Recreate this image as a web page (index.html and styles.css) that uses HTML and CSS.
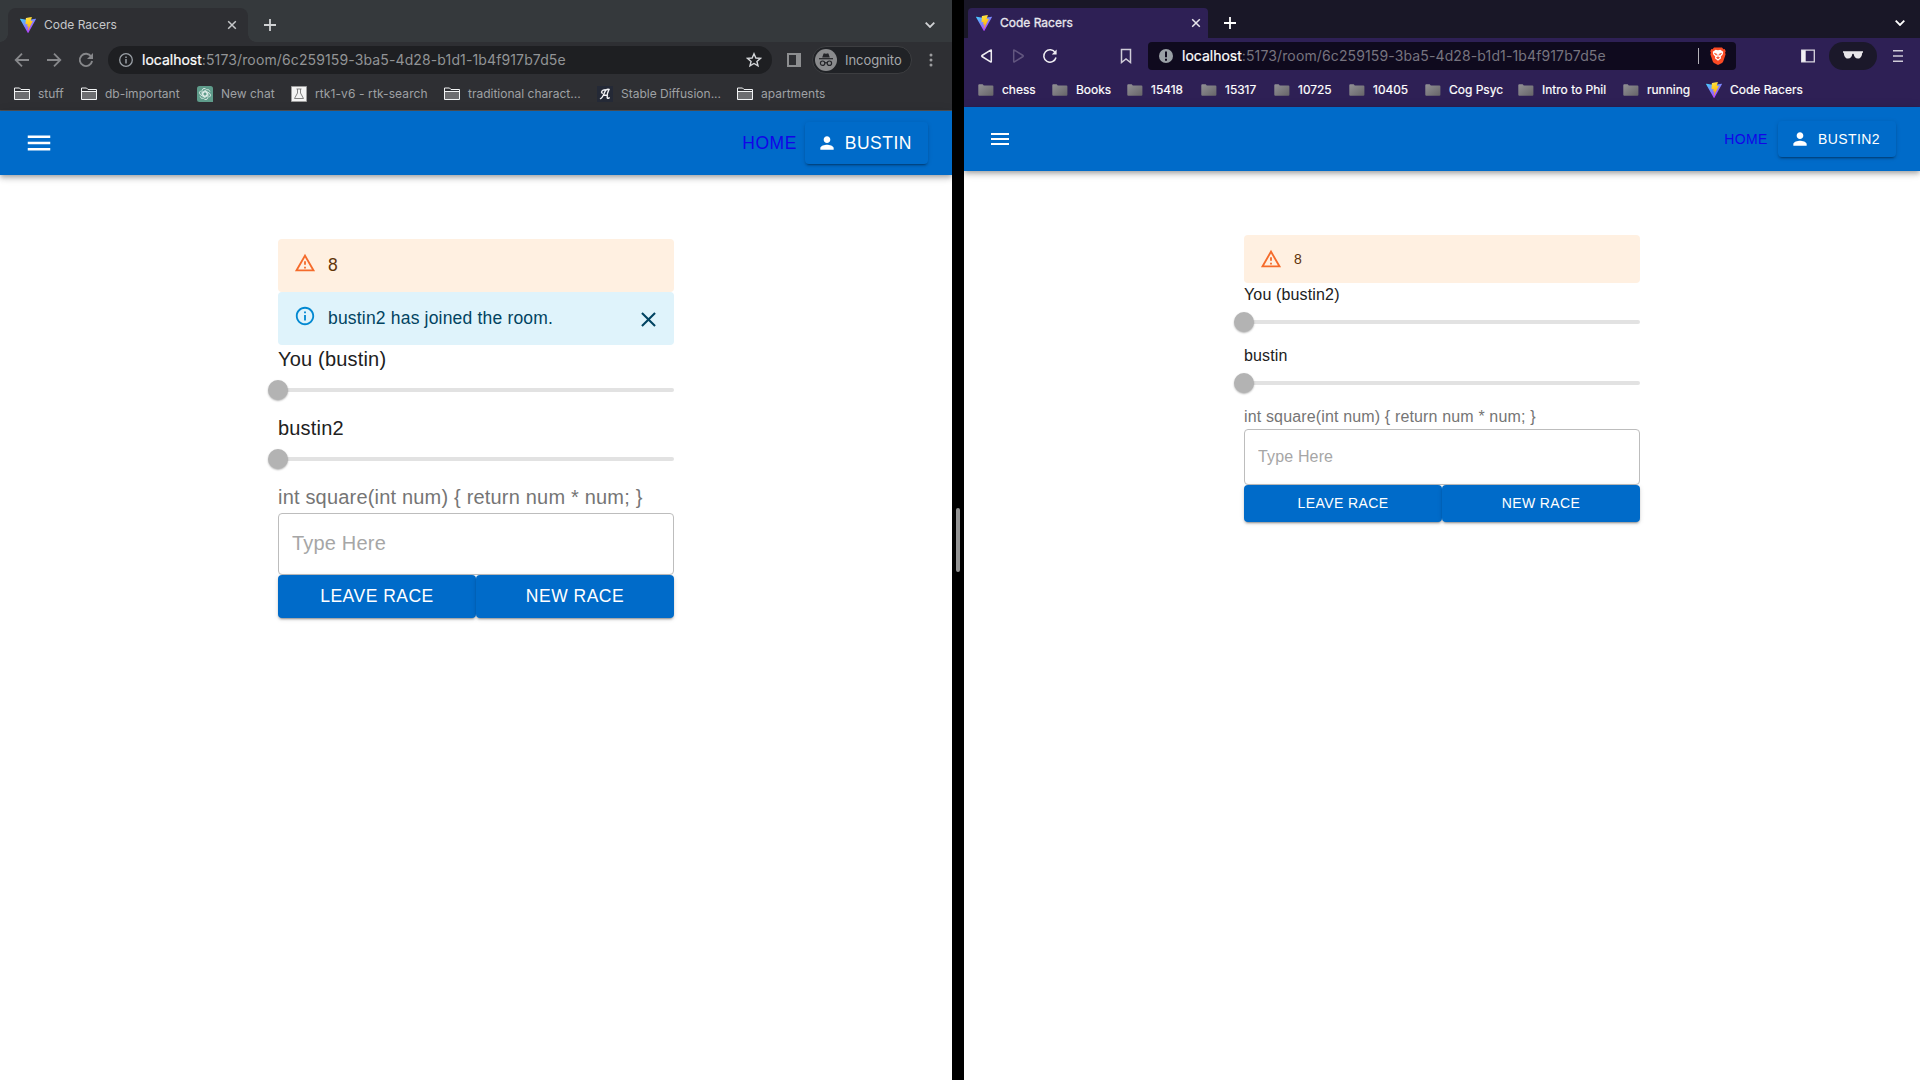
FILE: index.html
```html
<!DOCTYPE html>
<html lang="en">
<head>
<meta charset="utf-8">
<title>Code Racers</title>
<link rel="stylesheet" href="styles.css">
</head>
<body>
<svg class="defs" aria-hidden="true">
  <defs>
    <linearGradient id="vite-a" x1="0" y1="0" x2=".65" y2="1"><stop offset="0" stop-color="#41d1ff"/><stop offset="1" stop-color="#bd34fe"/></linearGradient>
    <linearGradient id="vite-b" x1=".4" y1="0" x2=".6" y2="1"><stop offset="0" stop-color="#ffea83"/><stop offset=".1" stop-color="#ffdd35"/><stop offset="1" stop-color="#ffa800"/></linearGradient>
    <linearGradient id="folder-fill" x1="0" y1="0" x2="1" y2="1"><stop offset="0" stop-color="#929196"/><stop offset="1" stop-color="#666468"/></linearGradient>
    <symbol id="vite" viewBox="0 0 256 257"><path fill="url(#vite-a)" d="M255.153 37.938 134.897 252.976c-2.483 4.44-8.862 4.466-11.382.048L.875 37.958c-2.746-4.814 1.371-10.646 6.827-9.67l120.385 21.517a6.537 6.537 0 0 0 2.322-.004l117.867-21.483c5.438-.991 9.574 4.796 6.877 9.62Z"/><path fill="url(#vite-b)" d="M185.432.063 96.44 17.501a3.268 3.268 0 0 0-2.634 3.014l-5.474 92.456a3.268 3.268 0 0 0 3.997 3.378l24.777-5.718c2.318-.535 4.413 1.507 3.936 3.838l-7.361 36.047c-.495 2.426 1.782 4.5 4.151 3.78l15.304-4.649c2.372-.72 4.652 1.36 4.15 3.788l-11.698 56.621c-.732 3.542 3.979 5.473 5.943 2.437l1.313-2.028 72.516-144.72c1.215-2.423-.88-5.186-3.54-4.672l-25.505 4.922c-2.396.462-4.435-1.77-3.759-4.114l16.646-57.705c.677-2.35-1.37-4.583-3.769-4.113Z"/></symbol>
    <symbol id="folder-line" viewBox="0 0 16 16"><path d="M.5 2h5l1.500 1.500h8.500v10H.5z" fill="#2e2f33" stroke="#f1f3f4" stroke-width="1"/><path d="M1 6h14v7H1z" fill="#6c6d70"/><path d="M1 5.500h14" stroke="#f1f3f4"/></symbol>
    <symbol id="folder-solid" viewBox="0 0 16 16"><path d="M.3 3.2q0-1 1-1h3.4l1.1 1.3h8.6q1 0 1 1v8.2q0 1-1 1H1.3q-1 0-1-1z" fill="url(#folder-fill)"/></symbol>
    <symbol id="menu" viewBox="0 0 24 24"><path fill="currentColor" d="M3 18h18v-2H3v2zm0-5h18v-2H3v2zm0-7v2h18V6H3z"/></symbol>
    <symbol id="person" viewBox="0 0 24 24"><path fill="currentColor" d="M12 12c2.21 0 4-1.79 4-4s-1.79-4-4-4-4 1.79-4 4 1.79 4 4 4zm0 2c-2.67 0-8 1.34-8 4v2h16v-2c0-2.66-5.33-4-8-4z"/></symbol>
    <symbol id="warning" viewBox="0 0 24 24"><path fill="currentColor" d="M12 5.99L19.53 19H4.47L12 5.99M12 2L1 21h22L12 2zm1 14h-2v2h2v-2zm0-6h-2v4h2v-4z"/></symbol>
    <symbol id="info" viewBox="0 0 24 24"><path fill="currentColor" d="M11 7h2v2h-2zM11 11h2v6h-2zM12 2C6.48 2 2 6.48 2 12s4.48 10 10 10 10-4.48 10-10S17.52 2 12 2zm0 18c-4.41 0-8-3.59-8-8s3.59-8 8-8 8 3.59 8 8-3.59 8-8 8z"/></symbol>
    <symbol id="close" viewBox="0 0 24 24"><path fill="currentColor" d="M19 6.41L17.59 5 12 10.59 6.41 5 5 6.41 10.59 12 5 17.59 6.41 19 12 13.41 17.59 19 19 17.59 13.41 12z"/></symbol>
    <symbol id="cross" viewBox="0 0 10 10"><path d="M1.200 1.200l7.600 7.600M8.800 1.200L1.200 8.800" stroke="currentColor" stroke-width="1.500"/></symbol>
    <symbol id="plus" viewBox="0 0 12 12"><path d="M6 0v12M0 6h12" stroke="currentColor" stroke-width="1.800"/></symbol>
    <symbol id="chevron" viewBox="0 0 10 6"><path d="M.7.7L5 5 9.300.7" fill="none" stroke="currentColor" stroke-width="1.800"/></symbol>
  </defs>
</svg>

<div class="desktop">
  <section class="window chrome">
    <header>
      <div class="tabstrip">
        <div class="tab"><svg class="i16"><use href="#vite"/></svg><span class="tab-title">Code Racers</span><svg class="tab-close"><use href="#cross"/></svg></div>
        <svg class="new-tab"><use href="#plus"/></svg>
        <svg class="tab-search"><use href="#chevron"/></svg>
      </div>
      <div class="toolbar">
        <svg class="nav" viewBox="0 0 16 16"><path d="M15 8H2M8 1.700L1.700 8 8 14.300" fill="none" stroke="currentColor" stroke-width="1.800"/></svg>
        <svg class="nav" viewBox="0 0 16 16"><path d="M1 8h13M8 1.700L14.300 8 8 14.300" fill="none" stroke="currentColor" stroke-width="1.800"/></svg>
        <svg class="nav" viewBox="0 0 16 16"><path d="M13.200 4.500A6.200 6.200 0 1 0 14.100 9" fill="none" stroke="currentColor" stroke-width="1.900"/><path d="M15 1v6H9z" fill="currentColor"/></svg>
        <div class="omnibox">
          <svg class="i16" viewBox="0 0 16 16"><circle cx="8" cy="8" r="6.300" fill="none" stroke="#9aa0a6" stroke-width="1.300"/><path d="M8 7v4.500M8 4.400v1.500" stroke="#9aa0a6" stroke-width="1.500"/></svg>
          <span class="url"><b>localhost</b>:5173/room/6c259159-3ba5-4d28-b1d1-1b4f917b7d5e</span>
          <svg class="i16 star" viewBox="0 0 16 16"><path d="M8 1.800l1.850 4.200 4.600.4-3.500 3 1.050 4.500L8 11.500l-4 2.400 1.050-4.500-3.500-3 4.600-.4z" fill="none" stroke="#d5d7da" stroke-width="1.400"/></svg>
        </div>
        <svg class="panel" viewBox="0 0 14 14"><path d="M1 1h12v12H1z" fill="none" stroke="#8d8e90" stroke-width="2"/><path d="M9 1h4v12H9z" fill="#8d8e90"/></svg>
        <div class="incognito">
          <svg viewBox="0 0 22 22"><circle cx="11" cy="11" r="11" fill="#8a8b8d"/><path d="M7.200 8.500l1.200-3.600q.3-.8 1.100-.5l1.500.4 1.500-.4q.8-.3 1.100.5l1.200 3.600z" fill="#242529"/><path d="M4 9.700h14" stroke="#242529" stroke-width="1.200"/><g fill="none" stroke="#242529" stroke-width="1.200"><circle cx="7.600" cy="14.200" r="2.200"/><circle cx="14.400" cy="14.200" r="2.200"/><path d="M9.800 14q1.200-.7 2.400 0"/></g></svg>
          <span>Incognito</span>
        </div>
        <svg class="dots" viewBox="0 0 4 14"><g fill="#9b9c9e"><circle cx="2" cy="2" r="1.500"/><circle cx="2" cy="7" r="1.500"/><circle cx="2" cy="12" r="1.500"/></g></svg>
      </div>
      <nav class="bookmarks">
        <span><svg class="i16"><use href="#folder-line"/></svg>stuff</span>
        <span><svg class="i16"><use href="#folder-line"/></svg>db-important</span>
        <span><svg class="i16" viewBox="0 0 16 16"><path d="M2.500 0h11Q16 0 16 2.500V16H2.500Q0 16 0 13.500v-11Q0 0 2.500 0z" fill="#5f9c8b"/><g fill="none" stroke="#e6f1ee" stroke-width=".8"><path id="petal" d="M8 5.600l2.100 1.200v3.400L6.500 12.300Q3.700 13.200 3 10.300"/><use href="#petal" transform="rotate(60 8 8)"/><use href="#petal" transform="rotate(120 8 8)"/><use href="#petal" transform="rotate(180 8 8)"/><use href="#petal" transform="rotate(240 8 8)"/><use href="#petal" transform="rotate(300 8 8)"/></g></svg>New chat</span>
        <span class="wide"><svg class="i16" viewBox="0 0 16 16"><path d="M.5.5h15v15H.5z" fill="#f4f4f4" stroke="#9d9d9d"/><path d="M5.500 3h5M6.500 3v4l-3 5.500h9L9.500 7V3" fill="none" stroke="#777" stroke-width=".9"/></svg>rtk1-v6 - rtk-search</span>
        <span><svg class="i16"><use href="#folder-line"/></svg>traditional charact...</span>
        <span><svg class="i16" viewBox="0 0 16 16"><rect width="16" height="16" fill="#242936"/><path d="M3.500 12.600c2.300-.4 3.800-6.500 5.300-8.300q1.500-1.400 3.200-.9c-1.300 2.400-2 6-1.800 8.200q.2 1.300 2 .2M5.200 7.300C3.700 6 5 4 8.300 3.800M6.500 9.300h4" fill="none" stroke="#f3f3f5" stroke-width="1.400" stroke-linecap="round"/></svg>Stable Diffusion...</span>
        <span><svg class="i16"><use href="#folder-line"/></svg>apartments</span>
      </nav>
    </header>
    <main class="page large">
      <div class="appbar">
        <svg class="menu-icon"><use href="#menu"/></svg>
        <a class="home">HOME</a>
        <button class="user"><svg><use href="#person"/></svg>BUSTIN</button>
      </div>
      <div class="container">
        <div class="alert warn"><svg><use href="#warning"/></svg><span>8</span></div>
        <div class="alert note"><svg><use href="#info"/></svg><span>bustin2 has joined the room.</span><svg class="dismiss"><use href="#close"/></svg></div>
        <p>You (bustin)</p>
        <div class="slider"><i></i></div>
        <p>bustin2</p>
        <div class="slider"><i></i></div>
        <p class="prompt">int square(int num) { return num * num; }</p>
        <input class="field" placeholder="Type Here">
        <div class="actions"><button>LEAVE RACE</button><button>NEW RACE</button></div>
      </div>
    </main>
  </section>

  <div class="divider"><i></i></div>

  <section class="window brave">
    <header>
      <div class="tabstrip">
        <div class="tab"><svg class="i16"><use href="#vite"/></svg><span class="tab-title">Code Racers</span><svg class="tab-close"><use href="#cross"/></svg></div>
        <svg class="new-tab"><use href="#plus"/></svg>
        <svg class="tab-search"><use href="#chevron"/></svg>
      </div>
      <div class="toolbar">
        <svg class="nav" viewBox="0 0 16 16"><path d="M13.300 2.500v11q0 .8-.7.3L4 8.500Q3.300 8 4 7.500l8.600-5.300q.7-.5.7.3z" fill="none" stroke="#efedf2" stroke-width="1.500"/></svg>
        <svg class="nav" viewBox="0 0 16 16"><path d="M3.700 2.500v11q0 .8.7.3L13 8.500q.7-.5 0-1L4.400 2.200q-.7-.5-.7.3z" fill="none" stroke="#62567f" stroke-width="1.500"/></svg>
        <svg class="nav" viewBox="0 0 16 16"><path d="M13.300 4.800A6.200 6.200 0 1 0 14 9.500" fill="none" stroke="#efedf2" stroke-width="1.500"/><path d="M14.600 1.500v5H9.800z" fill="#efedf2"/></svg>
        <svg class="mark" viewBox="0 0 12 16"><path d="M1.500 1.500h9v13L6 11l-4.500 3.500z" fill="none" stroke="#d0ccd8" stroke-width="1.500"/></svg>
        <div class="omnibox">
          <svg class="i16" viewBox="0 0 16 16"><circle cx="8" cy="8" r="7" fill="#9aa0a6"/><path d="M8 3.500v5.800M8 10.700v2" stroke="#0f0a1e" stroke-width="2"/></svg>
          <span class="url"><b>localhost</b>:5173/room/6c259159-3ba5-4d28-b1d1-1b4f917b7d5e</span>
          <i class="rule"></i>
          <svg class="lion" viewBox="0 0 16 18"><path d="M4 .5h8l1.500 1.700 1.200-.1 1 2.200-.6 1.500.5 1.500-2.300 7q-.4 1-1.300 1.600L8 18l-4-2.100q-.9-.6-1.300-1.600L.4 7.300.9 5.800.3 4.300l1-2.200 1.200.1z" fill="#fb4a24"/><path d="M8 3.300l2.300-.5 2.900 2-.4 2.400-2.100 2.600.4 1.500L8 13.800l-3.100-2.500.4-1.500-2.100-2.600-.4-2.400 2.900-2z" fill="#fff"/><path d="M4.300 6.200l2.500.9-.6 1.200zM11.700 6.200l-2.500.9.6 1.200zM8 7.300v2.500M6.400 10.600L8 9.900l1.600.7L8 11.900z" fill="#fb4a24" stroke="#fb4a24" stroke-width=".5"/></svg>
        </div>
        <svg class="panel" viewBox="0 0 14 14"><path d="M.7 1.200h12.600v11.600H.7z" fill="none" stroke="#d9d6df" stroke-width="1.300"/><path d="M.7 1.200h4v11.600h-4z" fill="#f2f0f4"/></svg>
        <div class="private"><svg viewBox="0 0 20 8"><path d="M0 .2h20v1.300l-.8.4c-.2 3-1.500 5.600-4.200 5.600-2.600 0-4-2-4.300-4.500Q10 2.500 9.300 3C9 5.500 7.600 7.500 5 7.500 2.300 7.500 1 4.900.8 1.900L0 1.500z" fill="#e8e6ea"/></svg></div>
        <svg class="burger" viewBox="0 0 10 12"><path d="M0 .7h10M0 6h10M0 11.300h10" stroke="#d0ccd8" stroke-width="1.400"/></svg>
      </div>
      <nav class="bookmarks">
        <span><svg class="i16"><use href="#folder-solid"/></svg>chess</span>
        <span><svg class="i16"><use href="#folder-solid"/></svg>Books</span>
        <span><svg class="i16"><use href="#folder-solid"/></svg>15418</span>
        <span><svg class="i16"><use href="#folder-solid"/></svg>15317</span>
        <span><svg class="i16"><use href="#folder-solid"/></svg>10725</span>
        <span><svg class="i16"><use href="#folder-solid"/></svg>10405</span>
        <span><svg class="i16"><use href="#folder-solid"/></svg>Cog Psyc</span>
        <span><svg class="i16"><use href="#folder-solid"/></svg>Intro to Phil</span>
        <span><svg class="i16"><use href="#folder-solid"/></svg>running</span>
        <span><svg class="i16"><use href="#vite"/></svg>Code Racers</span>
      </nav>
    </header>
    <main class="page">
      <div class="appbar">
        <svg class="menu-icon"><use href="#menu"/></svg>
        <a class="home">HOME</a>
        <button class="user"><svg><use href="#person"/></svg>BUSTIN2</button>
      </div>
      <div class="container">
        <div class="alert warn"><svg><use href="#warning"/></svg><span>8</span></div>
        <p>You (bustin2)</p>
        <div class="slider"><i></i></div>
        <p>bustin</p>
        <div class="slider"><i></i></div>
        <p class="prompt">int square(int num) { return num * num; }</p>
        <input class="field" placeholder="Type Here">
        <div class="actions"><button>LEAVE RACE</button><button>NEW RACE</button></div>
      </div>
    </main>
  </section>
</div>
</body>
</html>
```
FILE: styles.css
```css
* { box-sizing: border-box; }
body { margin: 0; background: #000; overflow: hidden; }
svg { display: block; flex: none; }
.defs { position: absolute; width: 0; height: 0; }
.i16 { width: 16px; height: 16px; }

.desktop { display: grid; grid-template-columns: 952px 12px 956px; height: 1080px; }
.window { display: flex; flex-direction: column; overflow: hidden; background: #fff; }
.divider { display: flex; justify-content: center; align-items: center; background: #000; }
.divider i { width: 4px; height: 64px; border-radius: 2px; background: #929292; }

/* browser frames */
header { font: 12px/16px Inter, sans-serif; white-space: nowrap; }
.tabstrip, .toolbar, .tab, .omnibox, .bookmarks span { display: flex; align-items: center; }
.tabstrip { padding-top: 8px; padding-left: 8px; }
.tab { width: 240px; padding: 0 11px 0 12px; border-radius: 8px 8px 0 0; align-self: stretch; }
.tab-title { margin-left: 8px; flex: 1; }
.tab-close { width: 10px; height: 10px; }
.new-tab { width: 12px; height: 12px; margin-left: 16px; }
.tab-search { width: 10px; height: 6px; margin-left: auto; }
.toolbar .nav { width: 16px; height: 16px; }
.omnibox { height: 28px; font-size: 14px; }
.url { flex: 1; letter-spacing: .125px; }
.url b { font-weight: 400; color: #fff; -webkit-text-stroke: .2px #fff; letter-spacing: 0; }
.panel { width: 14px; height: 14px; }
.bookmarks { display: grid; align-items: center; }
.bookmarks span { gap: 8px; }
.bookmarks .wide { letter-spacing: .1px; }

.chrome header { height: 111px; background: #2e2f33; border-bottom: 1px solid #505154; color: #9fa1a4; }
.chrome .tabstrip { height: 42px; background: #35393c; padding-right: 17px; }
.chrome .tab { background: #2e2f33; color: #c6c8ca; position: relative; }
.chrome .tab::before, .chrome .tab::after { content: ""; position: absolute; bottom: 0; width: 8px; height: 8px; }
.chrome .tab::before { right: 100%; background: radial-gradient(circle at 0 0, #35393c 7.5px, #2e2f33 8px); }
.chrome .tab::after { left: 100%; background: radial-gradient(circle at 100% 0, #35393c 7.5px, #2e2f33 8px); }
.chrome .new-tab, .chrome .tab-search { color: #d0d2d4; }
.chrome .toolbar { height: 36px; padding-left: 14px; color: #87888b; }
.chrome .nav + .nav { margin-left: 16px; }
.chrome .omnibox { width: 664px; margin-left: 14px; padding: 0 10px; border-radius: 14px; background: #1e1f22; color: #929496; }
.chrome .url { margin-left: 8px; }
.chrome .panel { margin-left: 15px; }
.incognito { display: flex; align-items: center; gap: 8px; width: 100px; height: 28px; margin-left: 11px; padding-left: 2px; border: 1px solid #3d3e41; border-radius: 14px; background: #202226; color: #a5a8ab; font-size: 13px; letter-spacing: -.05px; }
.incognito svg { width: 22px; height: 22px; }
.dots { width: 4px; height: 14px; margin-left: 16.5px; }
.chrome .bookmarks { height: 32px; padding-left: 14px; grid-template-columns: 67px 116px 94px 153px 153px 140px 100px; }

.brave header { height: 107px; background: #2e2055; color: #fff; }
.brave .tabstrip { height: 38px; background: #191727; padding-left: 4px; padding-right: 15px; }
.brave .tab { background: #2e2055; padding: 0 7px 0 8px; border-radius: 4px 4px 0 0; color: #e9e7ee; }
.brave .tab-title { -webkit-text-stroke: .3px #e9e7ee; }
.brave .toolbar { height: 36px; padding-left: 14px; }
.brave .nav + .nav { margin-left: 16px; }
.brave .mark { width: 12px; height: 16px; margin-left: 62px; }
.brave .omnibox { width: 588px; margin-left: 16px; padding: 0 10px; border-radius: 4px; background: #0f0a1e; color: #77747f; }
.brave .url { margin-left: 8px; }
.rule { width: 1px; height: 16px; background: #b5b2b9; margin-right: 11px; }
.lion { width: 16px; height: 18px; }
.brave .panel { margin-left: 65px; }
.private { display: grid; place-items: center; width: 48px; height: 28px; margin-left: 14px; padding-bottom: 2px; border-radius: 14px; background: #1b182a; }
.private svg { width: 20px; height: 8px; }
.burger { width: 10px; height: 12px; margin-left: 16px; }
.brave .bookmarks { height: 31px; padding-left: 14px; grid-template-columns: 74px 75px 74px 73px 75px 76px 93px 105px 83px 100px; -webkit-text-stroke: .2px #fff; }

/* Code Racers page; everything scales with the base text size */
.page { --base: 16px; font: 400 var(--base)/1.5 "Liberation Sans", Arial, sans-serif; color: #212121; }
.large { --base: 20px; }
.appbar { display: flex; align-items: center; height: 64px; padding: 0 24px; background: #006bc9; color: #fff; box-shadow: 0 2px 4px -1px rgba(0,0,0,.2), 0 4px 5px rgba(0,0,0,.14), 0 1px 10px rgba(0,0,0,.12); }
.menu-icon { width: 1.5em; height: 1.5em; margin-right: auto; }
.home, button { font: 400 calc(var(--base) * .875)/1.75 "Liberation Sans", Arial, sans-serif; letter-spacing: .02857em; }
.home { min-width: 64px; padding: 6px 8px; color: #1204e8; text-align: center; }
button { border: 0; border-radius: 4px; padding: 6px 16px; color: #fff; background: #006bc9; box-shadow: 0 3px 1px -2px rgba(0,0,0,.2), 0 2px 2px rgba(0,0,0,.14), 0 1px 5px rgba(0,0,0,.12); }
.user { display: flex; align-items: center; gap: 8px; padding-left: 12px; }
.user svg { width: 20px; height: 20px; }
.container { width: 396px; margin: 64px auto 0; }
.alert { display: flex; padding: 6px 16px; border-radius: 4px; font-size: .875em; line-height: 1.43; letter-spacing: .01071em; }
.alert svg { width: 22px; height: 22px; margin: 7px 12px 0 0; }
.alert span { padding: 8px 0; flex: 1; }
.alert .dismiss { width: 25px; height: 25px; margin: 9px -3px 0 0; color: #014361; }
.warn { background: #fff0e1; color: #5f3409; }
.warn svg { color: #f56b2b; }
.note { background: #dff3fb; color: #014361; }
.note svg { color: #0288d1; }
.page p { margin: 0; letter-spacing: .00938em; }
.large p { height: 30px; line-height: 28px; }
.page .prompt { color: #757575; }
.slider { height: 37px; padding-top: 13px; }
.large .slider { height: 39px; }
.slider::before { content: ""; display: block; height: 4px; border-radius: 2px; background: #e2e2e2; }
.slider i { display: block; width: 20px; height: 20px; margin: -12px 0 0 -10px; border-radius: 50%; background: #b3b3b3; box-shadow: 0 1px 2px rgba(0,0,0,.3); }
.field { display: block; width: 100%; height: calc(1.4375em + 33px); padding: 0 13px; border: 1px solid #bdbdbd; border-radius: 4px; font: inherit; letter-spacing: .00938em; color: inherit; background: #fff; }
.field::placeholder { color: #a6a6a6; opacity: 1; }
.actions { display: grid; grid-template-columns: 1fr 1fr; }
.large .actions { grid-auto-rows: 43px; }
```
